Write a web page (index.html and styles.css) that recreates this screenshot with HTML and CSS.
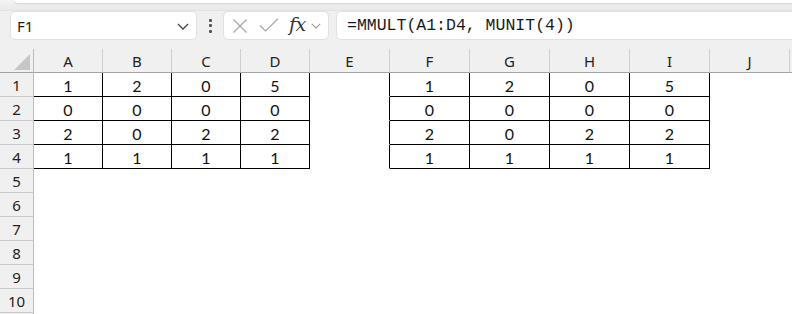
FILE: index.html
```html
<!DOCTYPE html>
<html>
<head>
<meta charset="utf-8">
<link rel="stylesheet" href="styles.css">
</head>
<body>
<div class="app">
  <div class="top">
    <div class="ribbon-edge"></div>
  </div>
  <div class="fbar">
    <div class="namebox">
      <span class="name">F1</span>
      <svg class="chev" width="12" height="7" viewBox="0 0 12 7"><path d="M1 1 L6 6 L11 1" fill="none" stroke="#444" stroke-width="1.3"/></svg>
    </div>
    <div class="dots"><span></span><span></span><span></span></div>
    <div class="fnbox">
      <svg class="ic-x" width="16" height="14" viewBox="0 0 16 14"><path d="M1.5 0.5 L14.5 13.5 M14.5 0.5 L1.5 13.5" stroke="#a6a6a6" stroke-width="1.2" fill="none"/></svg>
      <svg class="ic-ok" width="20" height="14" viewBox="0 0 20 14"><path d="M1 7.5 L6.5 13 L19 0.8" stroke="#a6a6a6" stroke-width="1.2" fill="none"/></svg>
      <span class="fx">fx</span>
      <svg class="chev2" width="10" height="6" viewBox="0 0 10 6"><path d="M0.8 0.8 L5 5 L9.2 0.8" fill="none" stroke="#9a9a9a" stroke-width="1.1"/></svg>
    </div>
    <div class="formula">=MMULT(A1:D4, MUNIT(4))</div>
  </div>
  <div class="sheet">
    <div class="ch corner"><span class="tri"></span></div>
    <div class="ch">A</div><div class="ch">B</div><div class="ch">C</div><div class="ch">D</div><div class="ch">E</div>
    <div class="ch">F</div><div class="ch">G</div><div class="ch">H</div><div class="ch">I</div><div class="ch">J</div><div class="ch"></div>

    <div class="rh">1</div>
    <div class="c t">1</div><div class="c t">2</div><div class="c t">0</div><div class="c t">5</div><div class="c e"></div>
    <div class="c t">1</div><div class="c t">2</div><div class="c t">0</div><div class="c t">5</div><div class="c"></div><div class="c"></div>

    <div class="rh">2</div>
    <div class="c t">0</div><div class="c t">0</div><div class="c t">0</div><div class="c t">0</div><div class="c e"></div>
    <div class="c t">0</div><div class="c t">0</div><div class="c t">0</div><div class="c t">0</div><div class="c"></div><div class="c"></div>

    <div class="rh">3</div>
    <div class="c t">2</div><div class="c t">0</div><div class="c t">2</div><div class="c t">2</div><div class="c e"></div>
    <div class="c t">2</div><div class="c t">0</div><div class="c t">2</div><div class="c t">2</div><div class="c"></div><div class="c"></div>

    <div class="rh">4</div>
    <div class="c t">1</div><div class="c t">1</div><div class="c t">1</div><div class="c t">1</div><div class="c e"></div>
    <div class="c t">1</div><div class="c t">1</div><div class="c t">1</div><div class="c t">1</div><div class="c"></div><div class="c"></div>

    <div class="rh">5</div><div class="c blank"></div>
    <div class="rh">6</div><div class="c blank"></div>
    <div class="rh">7</div><div class="c blank"></div>
    <div class="rh">8</div><div class="c blank"></div>
    <div class="rh">9</div><div class="c blank"></div>
    <div class="rh">10</div><div class="c blank"></div>
    <div class="rh"></div><div class="c blank"></div>
  </div>
</div>
</body>
</html>
```
FILE: styles.css
```css
* { box-sizing: border-box; }
html, body { margin: 0; padding: 0; }
body { background: #f0f0f0; overflow: hidden; }

.app {
  width: 792px;
  height: 314px;
  overflow: hidden;
  background: #f0f0f0;
  font-family: "Noto Sans", "Liberation Sans", sans-serif;
}

.top {
  height: 11px;
  background: linear-gradient(#f3f3f3, #e9e9e9);
  border-bottom: 1px solid #e2e2e2;
  padding-left: 15px;
}
.ribbon-edge {
  height: 3px;
  background: #ffffff;
  border-bottom-left-radius: 6px;
  box-shadow: 0 1px 2px rgba(0,0,0,0.12);
}

.fbar {
  display: flex;
  align-items: stretch;
  height: 29px;
  padding-left: 10px;
}

.namebox {
  width: 187px;
  flex: none;
  background: #fff;
  border: 1px solid #e1e1e1;
  border-radius: 5px;
  display: flex;
  align-items: center;
  justify-content: space-between;
  padding: 0 7px 0 6px;
}
.name {
  font-size: 15px;
  color: #1a1a1a;
}
.chev { display: block; margin-top: 1px; }

.dots {
  width: 26px;
  flex: none;
  display: flex;
  flex-direction: column;
  align-items: center;
  justify-content: center;
  gap: 2.5px;
}
.dots span {
  width: 3px;
  height: 3px;
  background: #555;
  border-radius: 1px;
}

.fnbox {
  width: 106px;
  flex: none;
  background: #fff;
  border: 1px solid #e1e1e1;
  border-radius: 5px;
  display: flex;
  align-items: center;
  padding-left: 8px;
}
.ic-x { display: block; }
.ic-ok { display: block; margin-left: 11px; margin-top: -1px; }
.fx {
  font-family: "DejaVu Serif", "Liberation Serif", serif;
  font-style: italic;
  font-size: 19px;
  color: #333;
  margin-left: 10px;
  line-height: 1;
  margin-top: -3px;
  letter-spacing: -0.5px;
}
.chev2 { display: block; margin-left: 5px; margin-top: 1px; }

.formula {
  flex: none;
  width: 470px;
  margin-left: 7px;
  background: #fff;
  border: 1px solid #e1e1e1;
  border-right: none;
  border-radius: 5px 0 0 5px;
  font-family: "Liberation Mono", "DejaVu Sans Mono", monospace;
  font-size: 16.5px;
  color: #1a1a1a;
  display: flex;
  align-items: center;
  padding-left: 10px;
}

.sheet {
  margin-top: 9px;
  display: grid;
  grid-template-columns: 34px 69px 69px 69px 69px 80px 80px 80px 80px 80px 80px 80px;
  grid-template-rows: repeat(12, 24px);
}

.ch {
  background: #f0f0f0;
  border-right: 1px solid #cfcfcf;
  border-bottom: 1px solid #a3a3a3;
  display: flex;
  align-items: center;
  justify-content: center;
  font-size: 15px;
  color: #222;
  padding-top: 1px;
}
.corner {
  position: relative;
  border-right: 1px solid #bdbdbd;
}
.tri {
  position: absolute;
  right: 3px;
  bottom: 2px;
  width: 0;
  height: 0;
  border-left: 16px solid transparent;
  border-bottom: 16px solid #c6c6c6;
}

.rh {
  background: #f0f0f0;
  border-right: 1px solid #bdbdbd;
  border-bottom: 1px solid #c9c9c9;
  display: flex;
  align-items: center;
  justify-content: center;
  font-size: 15px;
  color: #222;
  padding-top: 1px;
}

.c {
  background: #fff;
  border-right: 1px solid #fff;
  border-bottom: 1px solid #fff;
  display: flex;
  align-items: center;
  justify-content: center;
  font-family: "Lato", "Liberation Sans", sans-serif;
  font-size: 16px;
  color: #111;
  padding-top: 1px;
}
.c.t {
  border-right-color: #000;
  border-bottom-color: #000;
}
.c.e {
  border-right-color: #000;
}
.c.blank {
  grid-column: 2 / -1;
}
```
